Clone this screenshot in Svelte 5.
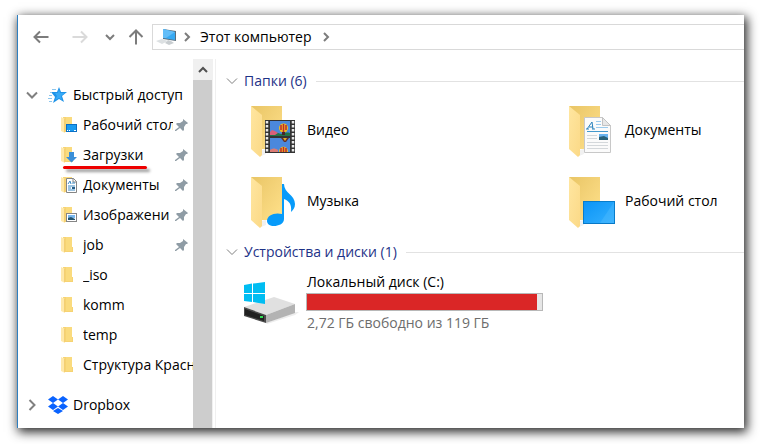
<script lang="ts">
	type Place = { name: string; kind: string; pinned?: boolean; marked?: boolean };

	const quickAccess: Place[] = [
		{ name: 'Рабочий стол', kind: 'desktop', pinned: true },
		{ name: 'Загрузки', kind: 'downloads', pinned: true, marked: true },
		{ name: 'Документы', kind: 'documents', pinned: true },
		{ name: 'Изображени', kind: 'pictures', pinned: true },
		{ name: 'job', kind: 'folder', pinned: true },
		{ name: '_iso', kind: 'folder' },
		{ name: 'komm', kind: 'folder' },
		{ name: 'temp', kind: 'folder' },
		{ name: 'Структура Красн', kind: 'folder' }
	];

	const folders: Place[] = [
		{ name: 'Видео', kind: 'video' },
		{ name: 'Документы', kind: 'documents' },
		{ name: 'Музыка', kind: 'music' },
		{ name: 'Рабочий стол', kind: 'desktop' }
	];

	const total = 119;
	const free = 2.72;
	let used = $derived(((total - free) / total) * 100);
</script>

{#snippet smallIcon(kind: string)}
	<svg class="small-icon" width="16" height="18" viewBox="0 0 16 18" aria-hidden="true">
		<path d="M2 1h9v10h1v5H4z" fill="#f6d373" />
		<path d="M5 1h6v14H5z" fill="#fadb7e" />
		<path d="M0 1l4 2v14l-4-2z" fill="#ffe9ab" />
		<path d="M3.500 3v13" stroke="#f3cf74" stroke-width="1" />
		{#if kind === 'desktop'}
			<rect x="5.500" y="8.500" width="10" height="7" fill="#1a9bf0" stroke="#0b6fc4" />
			<path d="M6 14.500h1M8 14.500h1M13 14.500h2" stroke="#fff" />
		{:else if kind === 'downloads'}
			<path d="M8 6h5v5h3l-5.500 5.500L5 11h3z" fill="#3a8fd8" />
		{:else if kind === 'documents'}
			<path d="M5.500 2.500h7l3 3v11h-10z" fill="#fff" stroke="#858585" />
			<path d="M12 2v4h4" fill="none" stroke="#858585" />
			<path d="M7 8l2-3 1 3M7 10h7M7 12h3M7 14h7M11 7h3" stroke="#3b8ac4" fill="none" />
			<path d="M11 12h3" stroke="#285e88" stroke-width="2" />
		{:else if kind === 'pictures'}
			<rect x="5.500" y="7.500" width="10" height="8" fill="#fff" stroke="#858585" />
			<path d="M7 9h7v3H7z" fill="#78b7ee" />
			<path d="M7 12l3-1 4 2v1H7z" fill="#24546e" />
		{/if}
	</svg>
{/snippet}

{#snippet largeIcon(kind: string)}
	<svg class="large-icon" width="52" height="56" viewBox="0 0 52 56" aria-hidden="true">
		<defs>
			<linearGradient id="back-{kind}" x1="0" y1="0" x2="1" y2="1">
				<stop offset="0" stop-color="#e9c565" />
				<stop offset="0.500" stop-color="#f4d379" />
				<stop offset="1" stop-color="#ffe18a" />
			</linearGradient>
			<linearGradient id="flap-{kind}" x1="0" y1="0" x2="1" y2="1">
				<stop offset="0" stop-color="#ffe6a0" />
				<stop offset="1" stop-color="#fbd987" />
			</linearGradient>
			<linearGradient id="screen-{kind}" x1="0" y1="0" x2="1" y2="1">
				<stop offset="0" stop-color="#0a94f6" />
				<stop offset="1" stop-color="#34b0ff" />
			</linearGradient>
		</defs>
		<path d="M4 2h31v43H14z" fill="url(#back-{kind})" />
		<path d="M14 46l5-1v5l-5 2z" fill="#f1f1f1" />
		<path d="M4 2l11 9v40l-2 2-9-8z" fill="url(#flap-{kind})" />
		{#if kind === 'video'}
			<rect x="18" y="16" width="30" height="33" fill="#333" />
			<path d="M20 17v31M46 17v31" stroke="#e8e8e8" stroke-width="2.500" stroke-dasharray="2.500 1.500" />
			<rect x="23" y="17" width="20" height="15" fill="#4b88dc" />
			<rect x="23" y="34" width="20" height="14" fill="#4b88dc" />
			<path d="M23 30c4-2 8-1 11 0 3-1 6-2 9-1v3H23z" fill="#237347" />
			<path d="M23 28l2-2 3 1 3 2-3 2h-5z" fill="#d9607a" />
			<ellipse cx="36.500" cy="24" rx="4.500" ry="4.500" fill="#efbb20" />
			<path d="M34 21v5M36.500 20v8M39 21v5" stroke="#bb2932" stroke-width="1.500" />
			<path d="M35 28h3v3h-3z" fill="#49242b" />
			<path d="M34 34h8l-3 4h-2z" fill="#62312c" />
			<path d="M36 34h4l-2 3z" fill="#e4ad29" />
			<path d="M23 46c3-2 5-2 8 0v2h-8z" fill="#dc7b74" />
			<path d="M32 48c0-7 9-7 9 0z" fill="#efbb20" />
			<path d="M34 44v4M36.500 43v5M39 44v4" stroke="#bb2932" stroke-width="1.500" />
		{:else if kind === 'documents'}
			<path d="M19.500 13.500h18l8 8v27h-26z" fill="#fbfbfb" stroke="#c8c8c8" />
			<path d="M37.500 13.500v8h8z" fill="#e7e7e7" stroke="#c2c2c2" />
			<path d="M22 25l5-7 1 7M24 23h4M21 25h3M27 25h3" fill="none" stroke="#2982bd" stroke-width="1" />
			<path d="M31 17.500h5M31 20.500h5M31 23.500h12" stroke="#9bcbed" />
			<path d="M22 27.500h21" stroke="#4499cd" />
			<path d="M22 31.500h10M22 34.500h10M22 38.500h21M22 41.500h21M22 44.500h21" stroke="#d4d8db" />
			<rect x="34" y="30" width="9" height="6" fill="#69b3ef" />
			<path d="M34 33l5-1 4 2v2h-9z" fill="#286179" />
		{:else if kind === 'music'}
			<path
				d="M35 9h2c0 9 11 11 11 20 0 4-2 6-4 8 1-8-2-11-7-13v20c0 5-6 7-10 7s-7-2-7-5c0-6 8-9 15-7z"
				fill="#079bfa"
			/>
		{:else if kind === 'desktop'}
			<rect x="18.500" y="26.500" width="31" height="22" fill="url(#screen-{kind})" stroke="#087cca" />
			<path d="M49 27L35 48h14z" fill="#61c2ff" opacity="0.300" />
			<path d="M19 48.500h30" stroke="#0878c6" />
		{/if}
	</svg>
{/snippet}

{#snippet chevron(direction: string)}
	<svg class="chevron {direction}" width="12" height="12" viewBox="0 0 12 12" aria-hidden="true">
		<path d="M1 3.500l5 5 5-5" fill="none" stroke="currentColor" />
	</svg>
{/snippet}

<div class="window">
	<header class="toolbar">
		<button class="back" aria-label="Назад">
			<svg width="16" height="16" viewBox="0 0 16 16"><path d="M15.500 8H1.500M7 2.500L1.500 8 7 13.500" /></svg>
		</button>
		<button class="forward" aria-label="Вперед" disabled>
			<svg width="16" height="16" viewBox="0 0 16 16"><path d="M0.500 8h14M9 2.500L14.500 8 9 13.500" /></svg>
		</button>
		<button class="recent" aria-label="Последние расположения">
			<svg width="10" height="10" viewBox="0 0 10 10"><path d="M1 3l4 4 4-4" /></svg>
		</button>
		<button class="up" aria-label="Вверх">
			<svg width="16" height="16" viewBox="0 0 16 16"><path d="M8 15.500V1.500M1.500 8L8 1.500 14.500 8" /></svg>
		</button>
		<nav class="address" aria-label="Адрес">
			<svg width="22" height="20" viewBox="0 0 22 20" aria-hidden="true">
				<path d="M8 2l13 2v10L8 12z" fill="#596d7c" />
				<path d="M8 2l12 3v8L8 11z" fill="#37a9f2" />
				<path d="M8 2l12 3-9 6-3 0z" fill="#62bdf8" />
				<path d="M13 13l3 1 3 2-5 2-4-2z" fill="#c8cdd0" />
				<path d="M1 14l6-2 6 2-6 3z" fill="#dce0e2" />
			</svg>
			<svg class="crumb" width="8" height="12" viewBox="0 0 8 12" aria-hidden="true"><path d="M2 2l4 4-4 4" /></svg>
			<a href="#computer">Этот компьютер</a>
			<svg class="crumb" width="8" height="12" viewBox="0 0 8 12" aria-hidden="true"><path d="M2 2l4 4-4 4" /></svg>
		</nav>
	</header>

	<div class="body">
		<nav class="tree" aria-label="Область переходов">
			<button class="root">
				<span class="expander open">{@render chevron('down')}</span>
				<svg width="20" height="18" viewBox="0 0 20 18" aria-hidden="true">
					<path d="M11 1l2 5h6l-5 4 2 6-5-3-6 4 2-6-4-5h6z" fill="#1e93e8" />
					<path d="M11 3l1 4h5l-4 3 1 4-3-2-4 2 2-4-2-3h3z" fill="#37aaf6" />
					<path d="M4 3.500h4M2 6.500h2M1 9.500h3M0 12.500h4M1 15.500h3" stroke="#8cc6ee" />
				</svg>
				<span>Быстрый доступ</span>
			</button>
			{#each quickAccess as place}
				<button class="place">
					{@render smallIcon(place.kind)}
					<span class="name">{place.name}</span>
					{#if place.pinned}
						<svg class="pin" width="14" height="14" viewBox="0 0 14 14" aria-hidden="true">
							<path d="M8 1l5 4-1 1-1 0-2 3 0 3-1 1-3-3-4 3-1 0 0-1 4-3-3-3 1-1 3 0 3-2z" fill="#8f9ca5" />
						</svg>
					{/if}
					{#if place.marked}
						<span class="marker"></span>
					{/if}
				</button>
			{/each}
			<button class="root dropbox">
				<span class="expander">{@render chevron('right')}</span>
				<svg width="20" height="18" viewBox="0 0 20 18" aria-hidden="true">
					<path
						d="M5 0l5 3.500L5 7 0 3.500zM15 0l5 3.500L15 7l-5-3.500zM5 7l5 3.500L5 14l-5-3.500zM15 7l5 3.500-5 3.500-5-3.500zM10 12l5 3-5 3-5-3z"
						fill="#0a63ff"
					/>
				</svg>
				<span>Dropbox</span>
			</button>
		</nav>

		<div class="scrollbar">
			<button aria-label="Прокрутить вверх">
				<svg width="10" height="10" viewBox="0 0 10 10"><path d="M1 7l4-4 4 4" /></svg>
			</button>
			<div class="thumb"></div>
		</div>

		<main>
			<h2>{@render chevron('down')}<span>Папки (6)</span></h2>
			<div class="folders">
				{#each folders as folder}
					<button class="folder">
						{@render largeIcon(folder.kind)}
						<span>{folder.name}</span>
					</button>
				{/each}
			</div>

			<h2>{@render chevron('down')}<span>Устройства и диски (1)</span></h2>
			<button class="drive">
				<svg width="56" height="44" viewBox="0 0 56 44" aria-hidden="true">
					<path d="M23 42l30-11 3 0-4 3-28 9z" fill="#ededed" />
					<path d="M1 26L31 16l21 7-29 11z" fill="#e0e0e0" />
					<path d="M23 34l29-11v9L23 42z" fill="#b3b3b3" />
					<path d="M1 26l22 8v8L1 35z" fill="#4a4a4a" />
					<path d="M2 28l19 7v5L2 34z" fill="#202020" />
					<path d="M17 36h3" stroke="#31dc55" stroke-width="2" />
					<path d="M1 4l8-1.500V12H1zM10 2.500L22 1v11H10zM1 13h8v8L1 20zM10 13h12v10l-12-2z" fill="#00bdf2" />
				</svg>
				<span class="drive-info">
					<span class="label">Локальный диск (C:)</span>
					<span class="capacity"><span class="used" style="width: {used}%"></span></span>
					<span class="label free">2,72 ГБ свободно из 119 ГБ</span>
				</span>
			</button>
		</main>
	</div>
</div>

<style>
	:global(body) {
		background: #fff;
	}

	.window {
		margin: 15px 16px 16px 17px;
		background: #fff;
		border-left: 1px solid #2e7fc0;
		box-shadow: 2px 3px 10px 1px rgba(0, 0, 0, 0.85);
		font-family: 'Open Sans', 'Noto Sans', sans-serif;
		font-size: 14px;
		line-height: 20px;
		color: #000;
	}

	button {
		display: flex;
		align-items: center;
		padding: 0;
		border: 0;
		background: none;
		font: inherit;
		color: inherit;
		text-align: left;
	}

	svg {
		flex: none;
	}

	.toolbar {
		display: flex;
		align-items: center;
		height: 44px;
		padding-left: 15px;
	}

	.toolbar button path {
		fill: none;
		stroke: #7c7c7c;
		stroke-width: 2;
	}

	.toolbar .forward {
		margin-left: 23px;
	}

	.toolbar .forward path {
		stroke: #dadada;
	}

	.toolbar .recent {
		margin: 0 13px 0 17px;
	}

	.address {
		flex: 1;
		display: flex;
		align-items: center;
		height: 24px;
		margin-left: 8px;
		padding-left: 2px;
		border: 1px solid #d9d9d9;
		border-right: 0;
	}

	.address a {
		margin: 0 10px 0 9px;
		color: #000;
		text-decoration: none;
	}

	.address svg + .crumb {
		margin-left: 6px;
	}

	.crumb path {
		fill: none;
		stroke: #7c7c7c;
		stroke-width: 2;
	}

	.body {
		display: flex;
	}

	.tree {
		width: 175px;
		padding: 21px 0 8px;
		overflow: hidden;
	}

	.root,
	.place {
		position: relative;
		width: 100%;
		height: 30px;
		white-space: nowrap;
	}

	.root {
		gap: 5px;
		padding-left: 8px;
	}

	.root.dropbox {
		margin-top: 10px;
	}

	.expander {
		display: flex;
		width: 17px;
		color: #a0a0a0;
	}

	.expander.open {
		color: #404040;
	}

	.expander path {
		stroke-width: 2;
	}

	.place {
		gap: 6px;
		padding-left: 43px;
	}

	.name {
		flex: 1;
		overflow: hidden;
	}

	.pin {
		margin: 0 4px 0 -4px;
	}

	.marker {
		position: absolute;
		left: 45px;
		bottom: 1px;
		width: 84px;
		height: 3px;
		border-radius: 2px;
		background: #ee0000;
		box-shadow: 3px 3px 3px rgba(0, 0, 0, 0.4);
	}

	.chevron {
		color: #808080;
	}

	.chevron.right {
		transform: rotate(-90deg);
	}

	.scrollbar {
		display: flex;
		flex-direction: column;
		width: 20px;
		margin-right: 2px;
		background: #f0f0f0;
	}

	.scrollbar button {
		justify-content: center;
		height: 21px;
	}

	.scrollbar path {
		fill: none;
		stroke: #505050;
		stroke-width: 2;
	}

	.thumb {
		flex: 1;
		margin-right: 1px;
		background: #cdcdcd;
	}

	main {
		flex: 1;
		min-width: 0;
		padding: 12px 0 0 10px;
		border-left: 1px solid #f0f0f0;
	}

	h2 {
		display: flex;
		align-items: center;
		gap: 6px;
		margin: 0;
		font-size: 14px;
		font-weight: 400;
		color: #1e3287;
	}

	h2::after {
		content: '';
		flex: 1;
		height: 1px;
		margin-left: 3px;
		background: #e2e2e2;
	}

	.folders {
		display: grid;
		grid-template-columns: 318px 1fr;
		row-gap: 15px;
		padding: 13px 0 11px 21px;
	}

	.folder {
		gap: 8px;
	}

	.folder span {
		padding-bottom: 4px;
	}

	.drive {
		gap: 7px;
		padding: 10px 0 0 17px;
	}

	.drive-info {
		display: flex;
		flex-direction: column;
	}

	.label {
		padding-left: 1px;
	}

	.capacity {
		width: 235px;
		height: 16px;
		margin: 1px 0 2px;
		border: 1px solid #b8b8b8;
		background: #e6e6e6;
	}

	.used {
		display: block;
		height: 100%;
		background: #da2626;
	}

	.free {
		color: #6d6d6d;
	}
</style>
